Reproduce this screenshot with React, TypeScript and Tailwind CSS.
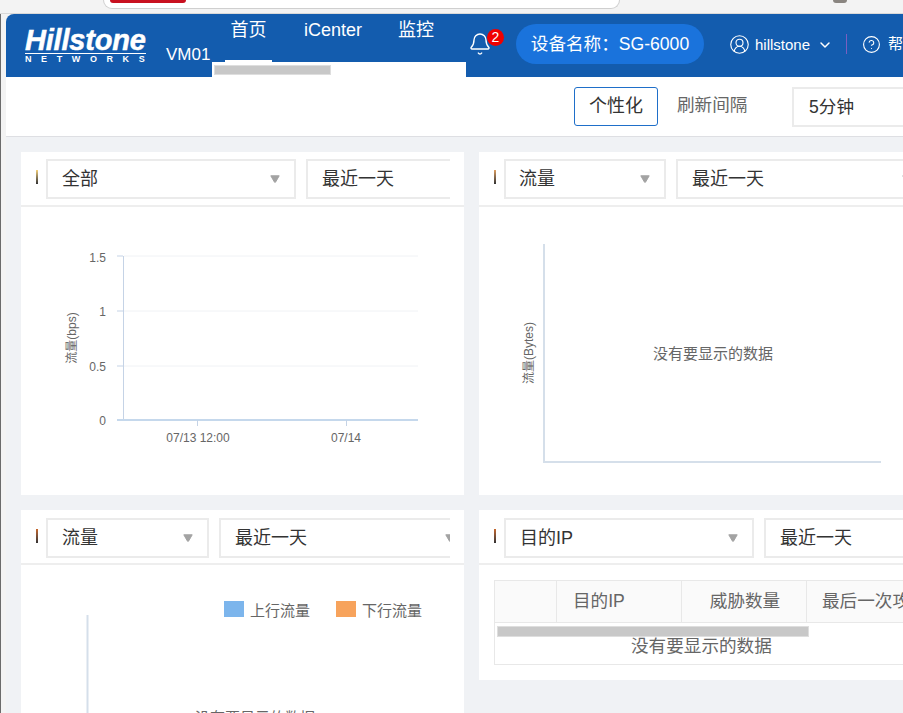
import { Bell, ChevronDown, CircleHelp, CircleUserRound } from 'lucide-react';

const Caret = () => (
  <svg width="10" height="8" viewBox="0 0 10 8" className="shrink-0">
    <path d="M.8.8h8.4L5.5 7.2h-1z" fill="#a3a3a3" stroke="#a3a3a3" strokeLinejoin="round" />
  </svg>
);

const Select = ({ label, className }: { label: string; className: string }) => (
  <div className={`h-10 shrink-0 border-2 border-[#ebebeb] flex items-center justify-between pr-[14px] text-[18px] text-[#333] whitespace-nowrap ${className}`}>
    <span className="pt-[1px]">{label}</span>
    <Caret />
  </div>
);

const CardHeader = ({ first, firstWidth, secondWidth, clip, pt = 'pt-[7px]', tip }: { first: string; firstWidth: string; secondWidth: string; clip: string; pt?: string; tip: string }) => (
  <div className={`h-[55px] border-b-2 border-[#eeeeee] pl-[15px] ${pt} overflow-hidden`}>
    <div className={`flex items-start overflow-hidden ${clip}`}>
      <div className={`w-[2px] h-[14px] mt-[11px] mr-[8px] shrink-0 ${tip}`} />
      <Select label={first} className={firstWidth} />
      <Select label="最近一天" className={`ml-[10px] pl-[14px] ${secondWidth}`} />
    </div>
  </div>
);

const TrafficChart = () => (
  <svg width="443" height="288" className="block" fontFamily="'Liberation Sans', 'Noto Sans CJK SC', sans-serif">
    {[49, 104, 159].map((y) => (
      <line key={y} x1="103" x2="397" y1={y} y2={y} stroke="#f0f2f5" />
    ))}
    {[49, 104, 159, 213].map((y) => (
      <line key={y} x1="96" x2="102" y1={y} y2={y} stroke="#c5d3e6" />
    ))}
    <line x1="102.5" x2="102.5" y1="49" y2="213" stroke="#c5d3e6" />
    <line x1="96" x2="397" y1="213" y2="213" stroke="#c5d8ec" strokeWidth="2" />
    <line x1="176.5" x2="176.5" y1="213" y2="219" stroke="#c5d3e6" />
    <line x1="325.5" x2="325.5" y1="213" y2="219" stroke="#c5d3e6" />
    <g fill="#666" fontSize="12" textAnchor="end">
      <text x="85" y="55">1.5</text>
      <text x="85" y="109">1</text>
      <text x="85" y="164">0.5</text>
      <text x="85" y="218">0</text>
    </g>
    <g fill="#666" fontSize="12" textAnchor="middle">
      <text x="177" y="235">07/13 12:00</text>
      <text x="325" y="235">07/14</text>
      <text transform="translate(55 131) rotate(-90)">流量(bps)</text>
    </g>
  </svg>
);

const EmptyBytesChart = () => (
  <svg width="424" height="288" className="block" fontFamily="'Liberation Sans', 'Noto Sans CJK SC', sans-serif">
    <line x1="65" x2="65" y1="37" y2="255" stroke="#d5dfea" strokeWidth="2" />
    <line x1="64" x2="402" y1="255" y2="255" stroke="#d5dfea" strokeWidth="2" />
    <text transform="translate(54 146) rotate(-90)" fill="#666" fontSize="12" textAnchor="middle">流量(Bytes)</text>
    <text x="234" y="152" fill="#666" fontSize="15" textAnchor="middle">没有要显示的数据</text>
  </svg>
);

const LegendChart = () => (
  <svg width="443" height="148" className="block" fontFamily="'Liberation Sans', 'Noto Sans CJK SC', sans-serif">
    <rect x="203" y="36" width="20" height="16" fill="#7cb5ec" />
    <text x="229" y="51" fill="#666" fontSize="15">上行流量</text>
    <rect x="315" y="36" width="20" height="16" fill="#f7a35c" />
    <text x="341" y="51" fill="#666" fontSize="15">下行流量</text>
    <line x1="66.5" x2="66.5" y1="50" y2="148" stroke="#d5dfea" strokeWidth="2" />
    <text transform="translate(54 184) rotate(-90)" fill="#666" fontSize="12" textAnchor="middle">流量(Bytes)</text>
    <text x="234" y="158" fill="#666" fontSize="15" textAnchor="middle">没有要显示的数据</text>
  </svg>
);

const App = () => {
  return (
    <div className="w-[903px] h-[713px] overflow-hidden bg-[#f3f3f3] font-['Liberation_Sans','Noto_Sans_CJK_SC',sans-serif]">
      {/* browser strip */}
      <div className="h-[14px] flex border-b border-[#d9d9d9] pl-[103px] overflow-hidden">
        <div className="w-[517px] h-[9px] bg-white border border-t-0 border-[#cfcfcf] rounded-b-[14px] pl-[6px] shrink-0">
          <div className="w-[76px] h-[3px] bg-[#c8101f] rounded-b-[8px]" />
        </div>
        <div className="w-[14px] h-[3px] ml-[213px] bg-[#8a8580] rounded-b-full" />
      </div>

      <div className="flex h-[699px]">
        <div className="w-[1px] bg-[#6b6b6b] shrink-0" />
        <div className="w-[5px] shrink-0" />
        <div className="flex-1 min-w-0 bg-[#f0f2f5] rounded-tl-[8px] overflow-hidden">
          {/* header */}
          <div className="h-[63px] bg-[#135cae] flex text-white whitespace-nowrap">
            <div className="w-[160px] shrink-0 pl-[19px] pt-[13px]">
              <div className="text-[29px] leading-[26px] font-bold italic tracking-[-0.2px] border-b border-white w-[121px] [-webkit-text-stroke:0.5px_white]">Hillstone</div>
              <div className="text-[9px] leading-[11px] tracking-[9.6px] font-bold">NETWORKS</div>
            </div>
            <div className="w-[46px] shrink-0 pt-[30px] text-[17px] leading-[22px]">VM01</div>
            <div className="w-[254px] shrink-0 flex flex-col">
              <div className="h-[48px] flex text-[18px] pl-[13px]">
                <div className="w-[47px] h-full border-b-2 border-white text-center pt-[3px] leading-[26px]">首页</div>
                <div className="ml-[32px] pt-[3px] leading-[26px]">iCenter</div>
                <div className="ml-[36px] pt-[3px] leading-[26px]">监控</div>
              </div>
              <div className="h-[15px] bg-white pl-[2px] pt-[3px]">
                <div className="w-[117px] h-[10px] bg-[#c8c8c8] border border-[#dedede]" />
              </div>
            </div>
            <div className="flex items-start pl-[2px] pt-[10px] min-w-0">
              <div className="relative w-[24px] h-[40px] pt-[8px] shrink-0">
                <Bell size={24} strokeWidth={1.4} />
                <span className="absolute left-[19px] top-[5px] w-[17px] h-[17px] rounded-full bg-[#f00000] text-[14px] leading-[17px] text-center">2</span>
              </div>
              <div className="ml-[24px] w-[188px] h-[40px] shrink-0 rounded-full bg-[#1a73dc] flex items-center justify-center text-[17.6px]">设备名称：SG-6000</div>
              <CircleUserRound size={21} strokeWidth={1.3} className="ml-[25px] mt-[10px] shrink-0" />
              <span className="ml-[5px] mt-[10px] text-[15px] leading-[21px]">hillstone</span>
              <ChevronDown size={16} strokeWidth={2.2} className="ml-[7px] mt-[13px] shrink-0" />
              <div className="ml-[13px] mt-[10px] w-[1px] h-[20px] bg-[#7a5fc0] shrink-0" />
              <CircleHelp size={19} strokeWidth={1.4} className="ml-[15px] mt-[11px] shrink-0" />
              <span className="ml-[7px] mt-[8px] text-[15px] leading-[24px]">帮助</span>
            </div>
          </div>

          {/* toolbar */}
          <div className="h-[60px] bg-white border-b border-[#dedfe3] flex items-start pt-[10px] pl-[568px] whitespace-nowrap">
            <div className="w-[84px] h-[39px] shrink-0 border border-[#1f6fc9] rounded-[3px] text-[18px] leading-[36px] text-center text-[#333]">个性化</div>
            <div className="ml-[19px] w-[71px] text-[17.6px] leading-[37px] text-[#666] shrink-0">刷新间隔</div>
            <div className="ml-[44px] w-[130px] h-[40px] shrink-0 border-2 border-[#ebebeb] text-[17.6px] leading-[36px] pl-[15px] text-[#333]">5分钟</div>
          </div>

          {/* widgets */}
          <div className="pl-[15px] pt-[15px] grid grid-cols-[443px_440px] gap-x-[15px] gap-y-[15px]">
            <div className="bg-white h-[343px]">
              <CardHeader first="全部" firstWidth="w-[250px] pl-[14px]" secondWidth="w-[252px]" clip="w-[414px]" tip="bg-gradient-to-b from-[#f7d27a] to-[#333]" />
              <TrafficChart />
            </div>
            <div className="bg-white h-[343px]">
              <CardHeader first="流量" firstWidth="w-[162px] pl-[13px]" secondWidth="w-[252px]" clip="w-[440px]" tip="bg-gradient-to-b from-[#e0a060] to-[#333]" />
              <EmptyBytesChart />
            </div>
            <div className="bg-white h-[203px]">
              <CardHeader first="流量" firstWidth="w-[163px] pl-[14px]" secondWidth="w-[252px]" clip="w-[414px]" pt="pt-[8px]" tip="bg-gradient-to-b from-[#c8682a] to-[#333]" />
              <LegendChart />
            </div>
            <div className="bg-white h-[170px] self-start">
              <CardHeader first="目的IP" firstWidth="w-[250px] pl-[14px]" secondWidth="w-[252px]" clip="w-[440px]" pt="pt-[8px]" tip="bg-gradient-to-b from-[#c8682a] to-[#333]" />
              <div className="relative ml-[15px] mt-[15px] border border-[#e8e8e8] border-r-0 h-[85px] overflow-hidden text-[17.6px] text-[#666] whitespace-nowrap">
                <div className="flex h-[42px] bg-[#fafafa] border-b border-[#e8e8e8] leading-[41px]">
                  <div className="w-[62px] shrink-0 border-r border-[#e8e8e8]" />
                  <div className="w-[125px] shrink-0 border-r border-[#e8e8e8] pl-[16px]">目的IP</div>
                  <div className="w-[125px] shrink-0 border-r border-[#e8e8e8] text-center pl-[2px]">威胁数量</div>
                  <div className="pl-[15px]">最后一次攻击</div>
                </div>
                <div className="h-[42px] leading-[46px] pl-[136px]">没有要显示的数据</div>
                <div className="absolute left-[2px] top-[45px] w-[312px] h-[11px] bg-[#c8c8c8] border border-[#dedede]" />
              </div>
            </div>
          </div>
        </div>
      </div>
    </div>
  );
};

export default App;
